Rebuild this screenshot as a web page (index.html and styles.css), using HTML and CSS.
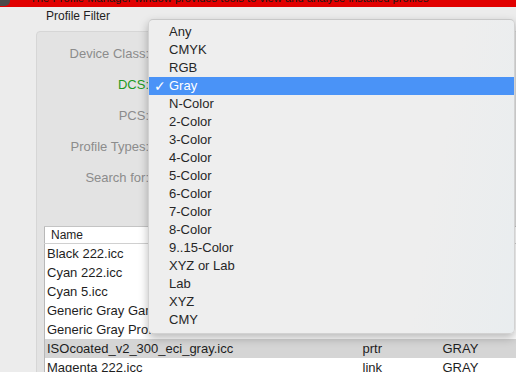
FILE: index.html
```html
<!DOCTYPE html>
<html lang="en">
<head>
    <meta charset="UTF-8">
    <title>Profile Manager</title>
    <link rel="stylesheet" href="styles.css">
</head>
<body>
    <div class="banner">
        <span class="banner-icon"></span>
        <span class="banner-text">The Profile Manager window provides tools to view and analyse installed profiles</span>
    </div>
    <div class="window">
        <div class="group-title">Profile Filter</div>
        <div class="group-box">
            <div class="filter-rows">
                <div class="filter-label">Device Class:</div>
                <div class="filter-label active">DCS:</div>
                <div class="filter-label">PCS:</div>
                <div class="filter-label">Profile Types:</div>
                <div class="filter-label">Search for:</div>
            </div>
            <table class="profiles">
                <thead>
                    <tr>
                        <th class="col-name">Name</th>
                        <th class="col-class">Class</th>
                        <th class="col-space">DCS</th>
                    </tr>
                </thead>
                <tbody>
                    <tr><td>Black 222.icc</td><td>link</td><td>GRAY</td></tr>
                    <tr><td>Cyan 222.icc</td><td>link</td><td>GRAY</td></tr>
                    <tr><td>Cyan 5.icc</td><td>prtr</td><td>GRAY</td></tr>
                    <tr><td>Generic Gray Gamma 2.2 Profile.icc</td><td>mntr</td><td>GRAY</td></tr>
                    <tr><td>Generic Gray Profile.icc</td><td>mntr</td><td>GRAY</td></tr>
                    <tr class="selected"><td>ISOcoated_v2_300_eci_gray.icc</td><td>prtr</td><td>GRAY</td></tr>
                    <tr><td>Magenta 222.icc</td><td>link</td><td>GRAY</td></tr>
                </tbody>
            </table>
        </div>
    </div>

    <ul class="popup-menu">
        <li>Any</li>
        <li>CMYK</li>
        <li>RGB</li>
        <li class="checked">Gray</li>
        <li>N-Color</li>
        <li>2-Color</li>
        <li>3-Color</li>
        <li>4-Color</li>
        <li>5-Color</li>
        <li>6-Color</li>
        <li>7-Color</li>
        <li>8-Color</li>
        <li>9..15-Color</li>
        <li>XYZ or Lab</li>
        <li>Lab</li>
        <li>XYZ</li>
        <li>CMY</li>
    </ul>
</body>
</html>
```

FILE: styles.css
```css
body {
    margin: 0;
    width: 516px;
    height: 372px;
    overflow: hidden;
    background-color: #ececec;
    font-family: "Liberation Sans", Arial, sans-serif;
    font-size: 13px;
    color: #1e1e1e;
    position: relative;
}

.banner {
    height: 7px;
    background-color: #e10000;
    overflow: hidden;
    display: flex;
    align-items: flex-start;
}

.banner-icon {
    width: 10px;
    height: 14px;
    margin-top: -8px;
    background-color: #4a4a4a;
    border-radius: 0 0 5px 0;
}

.banner-text {
    margin-left: 20px;
    margin-top: -8px;
    font-size: 11.2px;
    line-height: 12px;
    color: #1a1a1a;
    white-space: nowrap;
}

.window {
    padding-left: 36px;
}

.group-title {
    padding-left: 10px;
    height: 24px;
    line-height: 18px;
    font-size: 12px;
    color: #1e1e1e;
}

.group-box {
    width: 520px;
    height: 400px;
    background-color: #e3e3e3;
    border: 1px solid #d6d6d6;
    border-radius: 4px;
    padding: 6px 0 0 7px;
    box-sizing: border-box;
}

.filter-rows {
    display: flex;
    flex-direction: column;
    width: 105px;
    margin-bottom: 33px;
}

.filter-label {
    height: 31px;
    line-height: 31px;
    text-align: right;
    color: #8c8c8c;
    white-space: nowrap;
}

.filter-label.active {
    color: #1d9a24;
}

.profiles {
    width: 480px;
    border-collapse: collapse;
    background-color: #fff;
    border-left: 1px solid #b8b8b8;
    border-top: 1px solid #c4c4c4;
    table-layout: fixed;
}

.profiles th {
    height: 16px;
    padding: 0 0 0 6px;
    font-weight: normal;
    text-align: left;
    font-size: 12px;
    border-bottom: 1px solid #d0d0d0;
    border-right: 1px solid #d6d6d6;
}

.col-name {
    width: 303px;
}

.col-class {
    width: 73px;
}

.profiles td {
    height: 19px;
    padding: 0 0 0 2px;
    white-space: nowrap;
    overflow: hidden;
    line-height: 19px;
}

.profiles td + td {
    padding-left: 8px;
}

.profiles tr.selected td {
    background-color: #d5d5d5;
}

.popup-menu {
    position: absolute;
    left: 148px;
    top: 19px;
    width: 367px;
    margin: 0;
    padding: 3px 0 4px;
    list-style: none;
    background: linear-gradient(100deg, #eeeeee 75%, #e9edef 100%);
    border: 1px solid #d2d2d2;
    border-top-color: #c8c8c8;
    border-radius: 5px;
    box-shadow: 0 4px 10px rgba(0, 0, 0, 0.28);
    box-sizing: border-box;
}

.popup-menu li {
    height: 18px;
    line-height: 18px;
    padding-left: 20px;
    color: #262626;
    position: relative;
}

.popup-menu li.checked {
    background-color: #4a93f7;
    color: #fff;
}

.popup-menu li.checked::before {
    content: "\2713";
    position: absolute;
    left: 5px;
    top: 0;
    font-family: "DejaVu Sans", sans-serif;
    font-size: 14px;
}
```
